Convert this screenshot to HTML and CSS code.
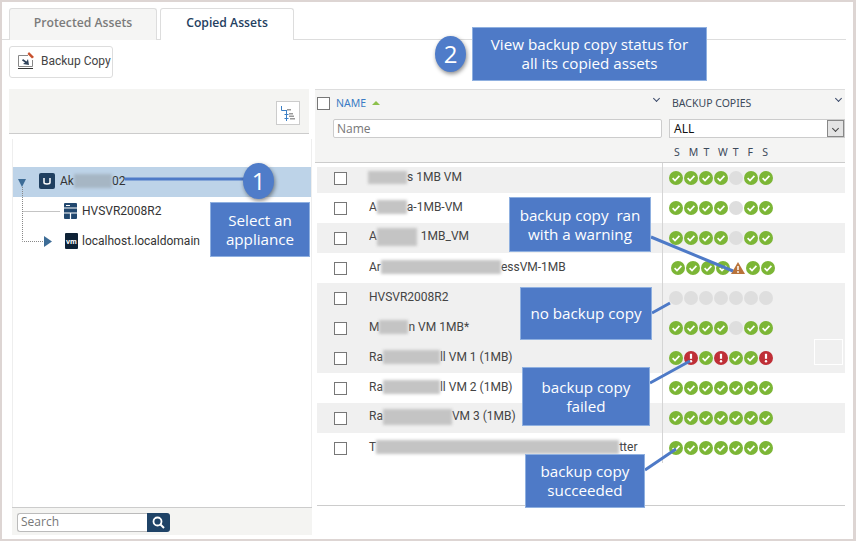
FILE: index.html
```html
<!DOCTYPE html>
<html lang="en">
<head>
<meta charset="utf-8">
<title>Copied Assets</title>
<link rel="stylesheet" href="styles.css">
</head>
<body>
<svg class="defs" width="0" height="0" aria-hidden="true">
  <symbol id="ok" viewBox="0 0 14 14"><circle cx="7" cy="7" r="7" fill="#7cb636"/><path d="M3.6 7.2l2.4 2.3 4.4-4.6" fill="none" stroke="#fff" stroke-width="1.7"/></symbol>
  <symbol id="none" viewBox="0 0 14 14"><circle cx="7" cy="7" r="7" fill="#dedede"/></symbol>
  <symbol id="bad" viewBox="0 0 14 14"><circle cx="7" cy="7" r="7" fill="#bf2f37"/><path d="M7 2.8v5" stroke="#fff" stroke-width="2.2"/><circle cx="7" cy="10.3" r="1.2" fill="#fff"/></symbol>
  <symbol id="warn" viewBox="0 0 14 14"><path d="M7 1L14 13H0z" fill="#b9733a"/><path d="M7 5v4" stroke="#fff" stroke-width="1.5"/><circle cx="7" cy="11" r=".9" fill="#fff"/></symbol>
</svg>
<div class="frame">
  <nav class="tabs">
    <div class="tab">Protected Assets</div>
    <div class="tab active">Copied Assets</div>
  </nav>
  <div class="toolbar">
    <button class="tool-btn">
      <svg width="18" height="18" viewBox="0 0 18 18"><path d="M11 3.500H1.500v11h14V8" fill="none" stroke="#888" stroke-width="1"/><path d="M1 16.500h15" stroke="#333" stroke-width="1"/><path d="M12 0l5 5-2 1.500-4.500-4.500z" fill="#c8502d"/><path d="M6 7l3.500 2.500L11 7l1 6-6-1 2-1.500-3-2z" fill="#30435a"/></svg>
      <span>Backup Copy</span>
    </button>
  </div>
  <main class="content">
    <section class="tree">
      <div class="tree-head">
        <button class="tree-btn">
          <svg width="14" height="15" viewBox="0 0 14 15"><path d="M.5 0v4.500h5M5.500 4v9M3.500 8.500h4M3.500 12.500h4M5.500 13v2" fill="none" stroke="#3b7fc4" stroke-width="1"/><path d="M6 3h4v1.500H6zM8 7h4v1.500H8zM8 9.500h5V11H8zM9 12h5v1.500H9z" fill="#999"/></svg>
        </button>
      </div>
      <div class="tree-body">
        <div class="tree-row selected">
          <i class="tri-down"></i>
          <svg class="node-icon" width="16" height="16" viewBox="0 0 16 16"><rect width="16" height="16" rx="2" fill="#1f3f60"/><path d="M5 5v4.500q0 1.500 3 1.500t3-1.500V5" fill="none" stroke="#fff" stroke-width="1.500"/></svg>
          <span>Ak<b class="blur b-a"></b>02</span>
        </div>
        <div class="tree-row child">
          <svg class="node-icon srv" width="13" height="16" viewBox="0 0 13 16"><rect width="13" height="16" rx="1" fill="#22486f"/><path d="M0 5h13M0 10h13M6.500 10v6" stroke="#fff" stroke-width="1.200"/><path d="M2 2.500h4" stroke="#fff"/></svg>
          <span>HVSVR2008R2</span>
        </div>
        <div class="tree-row child">
          <svg class="node-icon" width="13" height="16" viewBox="0 0 13 16"><rect width="13" height="16" rx="1" fill="#0e2236"/><text x="6.500" y="10.500" class="vm-text">vm</text></svg>
          <span>localhost.localdomain</span>
        </div>
        <svg class="tree-lines" width="60" height="70" viewBox="0 0 60 70"><path d="M9.500 0v54.500h22M9.500 24.500h37" fill="none" stroke="#888" stroke-dasharray="1 1"/><path d="M31 49l8 5.500-8 5.500z" fill="#3d6c96"/></svg>
      </div>
      <div class="tree-foot">
        <input class="search" placeholder="Search" aria-label="Search">
        <button class="search-btn"><svg width="13" height="13" viewBox="0 0 13 13"><circle cx="5.500" cy="5.500" r="4" fill="none" stroke="#fff" stroke-width="1.800"/><path d="M8.500 8.500l3.500 3.500" stroke="#fff" stroke-width="2"/></svg></button>
      </div>
    </section>
    <section class="grid">
      <div class="grid-head">
        <div class="col-check"><i class="check"></i></div>
        <div class="col-name">
          <div class="col-title"><span class="name-label">NAME <i class="sort"></i></span><i class="chev"></i></div>
          <input class="name-filter" placeholder="Name" aria-label="Name">
        </div>
        <div class="col-copies">
          <div class="col-title"><span>BACKUP COPIES</span><i class="chev"></i></div>
          <div class="select"><span>ALL</span><i class="select-arrow"><i class="chev dark"></i></i></div>
          <div class="days"><span>S</span><span>M</span><span>T</span><span>W</span><span>T</span><span>F</span><span>S</span></div>
        </div>
      </div>
      <div class="rows">
        <div class="row first"><i class="check"></i><span class="nm"><b class="blur b1"></b>s 1MB VM</span><span class="st"><svg><use href="#ok"/></svg><svg><use href="#ok"/></svg><svg><use href="#ok"/></svg><svg><use href="#ok"/></svg><svg><use href="#none"/></svg><svg><use href="#ok"/></svg><svg><use href="#ok"/></svg></span></div>
        <div class="row"><i class="check"></i><span class="nm">A<b class="blur b2"></b>a-1MB-VM</span><span class="st"><svg><use href="#ok"/></svg><svg><use href="#ok"/></svg><svg><use href="#ok"/></svg><svg><use href="#ok"/></svg><svg><use href="#none"/></svg><svg><use href="#ok"/></svg><svg><use href="#ok"/></svg></span></div>
        <div class="row shade"><i class="check"></i><span class="nm">A<b class="blur b3"></b>1MB_VM</span><span class="st"><svg><use href="#ok"/></svg><svg><use href="#ok"/></svg><svg><use href="#ok"/></svg><svg><use href="#ok"/></svg><svg><use href="#none"/></svg><svg><use href="#ok"/></svg><svg><use href="#ok"/></svg></span></div>
        <div class="row"><i class="check"></i><span class="nm">Ar<b class="blur b4"></b>essVM-1MB</span><span class="st nudge"><svg><use href="#ok"/></svg><svg><use href="#ok"/></svg><svg><use href="#ok"/></svg><svg><use href="#ok"/></svg><svg><use href="#warn"/></svg><svg><use href="#ok"/></svg><svg><use href="#ok"/></svg></span></div>
        <div class="row shade"><i class="check"></i><span class="nm">HVSVR2008R2</span><span class="st"><svg><use href="#none"/></svg><svg><use href="#none"/></svg><svg><use href="#none"/></svg><svg><use href="#none"/></svg><svg><use href="#none"/></svg><svg><use href="#none"/></svg><svg><use href="#none"/></svg></span></div>
        <div class="row shade"><i class="check"></i><span class="nm">M<b class="blur b6"></b>n VM 1MB*</span><span class="st"><svg><use href="#ok"/></svg><svg><use href="#ok"/></svg><svg><use href="#ok"/></svg><svg><use href="#ok"/></svg><svg><use href="#none"/></svg><svg><use href="#ok"/></svg><svg><use href="#ok"/></svg></span></div>
        <div class="row shade"><i class="check"></i><span class="nm">Ra<b class="blur b7"></b>ll VM 1 (1MB)</span><span class="st"><svg><use href="#ok"/></svg><svg><use href="#bad"/></svg><svg><use href="#ok"/></svg><svg><use href="#bad"/></svg><svg><use href="#ok"/></svg><svg><use href="#ok"/></svg><svg><use href="#bad"/></svg></span></div>
        <div class="row"><i class="check"></i><span class="nm">Ra<b class="blur b8"></b>ll VM 2 (1MB)</span><span class="st"><svg><use href="#ok"/></svg><svg><use href="#ok"/></svg><svg><use href="#ok"/></svg><svg><use href="#ok"/></svg><svg><use href="#ok"/></svg><svg><use href="#ok"/></svg><svg><use href="#ok"/></svg></span></div>
        <div class="row shade"><i class="check"></i><span class="nm">Ra<b class="blur b9"></b>VM 3 (1MB)</span><span class="st"><svg><use href="#ok"/></svg><svg><use href="#ok"/></svg><svg><use href="#ok"/></svg><svg><use href="#ok"/></svg><svg><use href="#ok"/></svg><svg><use href="#ok"/></svg><svg><use href="#ok"/></svg></span></div>
        <div class="row"><i class="check"></i><span class="nm">T<b class="blur b10"></b>tter</span><span class="st"><svg><use href="#ok"/></svg><svg><use href="#ok"/></svg><svg><use href="#ok"/></svg><svg><use href="#ok"/></svg><svg><use href="#ok"/></svg><svg><use href="#ok"/></svg><svg><use href="#ok"/></svg></span></div>
      </div>
    </section>
  </main>
</div>

<svg class="leaders" width="856" height="541" viewBox="0 0 856 541" aria-hidden="true">
  <path d="M125 179H245M651 237L733 271M652 313L670 303M650 383L690 361M645 470L676 449" fill="none" stroke="#4e7ac7" stroke-width="3"/>
</svg>
<div class="ghost"></div>
<div class="badge b-one">1</div>
<div class="badge b-two">2</div>
<div class="note n-select">Select an appliance</div>
<div class="note n-view">View backup copy status for all its copied assets</div>
<div class="note n-warn">backup copy&nbsp; ran with a warning</div>
<div class="note n-none">no backup copy</div>
<div class="note n-fail">backup copy failed</div>
<div class="note n-ok">backup copy succeeded</div>
</body>
</html>
```
FILE: styles.css
```css
* { box-sizing: border-box; }
html, body { margin: 0; padding: 0; }
body {
  width: 856px;
  height: 541px;
  position: relative;
  overflow: hidden;
  background: #fff;
  font-family: "Open Sans", "Noto Sans", sans-serif;
  color: #333;
}
.defs { position: absolute; }
.frame {
  width: 856px;
  height: 541px;
  border: 2px solid #ddd5d3;
  border-right-width: 3px;
  display: flex;
  flex-direction: column;
  background: #fff;
}
.tabs {
  display: flex;
  gap: 3px;
  height: 38px;
  padding: 6px 0 0 7px;
  width: 844px;
  border-bottom: 1px solid #ddd;
}
.tab {
  width: 148px;
  height: 32px;
  background: #f5f5f4;
  border: 1px solid #ddd;
  border-bottom: 0;
  border-radius: 3px 3px 0 0;
  color: #7b7b7b;
  font-size: 12.200px;
  font-weight: 600;
  text-align: center;
  line-height: 28px;
}
.tab.active {
  width: 134px;
  background: #fff;
  color: #24405f;
}
.toolbar { padding: 6px 0 0 7px; height: 49px; }
.tool-btn {
  width: 104px;
  height: 32px;
  padding: 0 0 2px 7px;
  background: #fff;
  border: 1px solid #ddd;
  border-radius: 3px;
  display: flex;
  align-items: center;
  gap: 6px;
  font: 12px Roboto, sans-serif;
  color: #444;
  white-space: nowrap;
}
.content { display: flex; flex: 1; min-height: 0; }
.tree {
  width: 305px;
  margin: 0 0 4px 7px;
  display: flex;
  flex-direction: column;
  position: relative;
}
.tree-head {
  width: 300px;
  height: 45px;
  background: #f4f4f2;
  border-bottom: 1px solid #ccc;
  display: flex;
  justify-content: flex-end;
  align-items: flex-start;
  padding: 12px 9px 0 0;
}
.tree-btn {
  width: 24px;
  height: 24px;
  padding: 3px;
  background: #fff;
  border: 1px solid #ccc;
  display: flex;
  align-items: center;
  justify-content: center;
}
.tree-body {
  flex: 1;
  margin: 5px 0 0 3px;
  width: 300px;
  padding-top: 28px;
  border-left: 1px solid #eee;
  border-right: 1px solid #eee;
  position: relative;
}
.tree-row {
  height: 30px;
  display: flex;
  align-items: center;
  font: 12px Roboto, sans-serif;
  color: #333;
  padding: 0 0 2px 52px;
  gap: 4px;
}
.tree-row.selected { background: #bdd3e8; padding-left: 5px; gap: 5px; }
.tree-row.selected .node-icon { margin-left: 8px; }
.tri-down {
  width: 0;
  height: 0;
  margin-top: 4px;
  border-left: 4.500px solid transparent;
  border-right: 4.500px solid transparent;
  border-top: 8px solid #3d6c96;
}
.node-icon { flex: none; }
.srv { margin-left: -1px; margin-right: 1px; }
.vm-text { fill: #fff; font: bold 7px "Noto Sans", sans-serif; text-anchor: middle; }
.tree-lines { position: absolute; left: 0; top: 48px; }
.tree-foot {
  margin-left: 3px;
  width: 300px;
  height: 28px;
  background: #f4f4f2;
  border-top: 1px solid #ccc;
  display: flex;
  padding: 5px 0 0 5px;
}
.search {
  width: 130px;
  height: 19px;
  padding: 0 3px 2px;
  border: 1px solid #bbb;
  border-right: 0;
  border-radius: 3px 0 0 3px;
  font: 12px "Open Sans", sans-serif;
  background: #fff;
}
.search::placeholder, .name-filter::placeholder { color: #777; opacity: 1; }
.search-btn {
  width: 23px;
  height: 19px;
  padding: 0;
  border: 0;
  border-radius: 0 3px 3px 0;
  background: #1f4367;
  display: flex;
  align-items: center;
  justify-content: center;
}
.grid { width: 530px; margin-left: 1px; height: 417px; }
.grid-head {
  height: 74px;
  background: #f4f4f3;
  border-top: 1px solid #ddd;
  border-bottom: 1px solid #ccc;
  display: flex;
}
.col-check { width: 18px; padding: 7px 0 0 2px; }
.check {
  display: block;
  width: 13px;
  height: 13px;
  background: #fff;
  border: 1px solid #777;
  flex: none;
}
.col-name { width: 330px; }
.col-title {
  height: 29px;
  display: flex;
  justify-content: space-between;
  padding: 5px 4px 0 3px;
  font: 10.500px "Noto Sans", sans-serif;
  line-height: 17px;
  color: #3c4a5a;
}
.name-label { color: #3b7cc4; }
.sort {
  display: inline-block;
  margin-left: 3px;
  vertical-align: 2px;
  border-left: 4px solid transparent;
  border-right: 4px solid transparent;
  border-bottom: 4px solid #8cc04b;
}
.chev {
  display: block;
  width: 5px;
  height: 5px;
  margin-top: 1px;
  border-right: 1px solid #3c4a6a;
  border-bottom: 1px solid #3c4a6a;
  transform: rotate(45deg);
}
.chev.dark { margin: 0; border-color: #444; }
.name-filter {
  display: block;
  width: 329px;
  height: 19px;
  padding: 0 3px;
  border: 1px solid #ccc;
  border-radius: 2px;
  background: #fff;
  font: 12px "Open Sans", sans-serif;
}
.col-copies { width: 182px; padding-left: 6px; }
.select {
  width: 176px;
  height: 19px;
  background: #fff;
  border: 1px solid #ccc;
  display: flex;
  justify-content: space-between;
  font: 12px/17px "Noto Sans", sans-serif;
  color: #111;
  padding-left: 4px;
}
.select-arrow {
  width: 17px;
  background: #e4e4e4;
  border: 1px solid #888;
  display: flex;
  align-items: center;
  justify-content: center;
}
.days {
  display: flex;
  padding: 7px 0 0 5px;
  font: 10.500px "Noto Sans", sans-serif;
  color: #3c4a5a;
}
.days span { width: 14.700px; }
.rows {
  margin-left: 2px;
  height: 343px;
  border-bottom: 1px solid #ccc;
  background: #fff;
}
.row {
  height: 30px;
  display: flex;
  align-items: center;
  font: 12px Roboto, sans-serif;
  color: #444;
  padding-left: 17px;
}
.row.shade { background: #f0f0f0; }
.row.first { background: linear-gradient(#fff 4px, #f0f0f0 4px); }
.nm { margin-left: 22px; width: 293px; white-space: nowrap; padding-bottom: 2px; }
.st { display: flex; gap: 1px; height: 30px; align-items: center; padding-left: 6px; border-left: 1px solid #d5d5d5; }
.st svg { width: 14px; height: 14px; flex: none; }
.st.nudge { padding-left: 8px; }
.blur {
  display: inline-block;
  height: 14px;
  vertical-align: middle;
  background: #c4c4c4;
  filter: blur(1.500px);
}
.b-a { width: 38px; background: #a6b6c4; height: 14px; }
.b1 { width: 39px; height: 13px; margin-left: -1px; }
.b2 { width: 30px; }
.b3 { width: 40px; height: 18px; margin-right: 4px; }
.b4 { width: 120px; }
.b6 { width: 29px; }
.b7 { width: 57px; }
.b8 { width: 57px; }
.b9 { width: 69px; height: 16px; }
.b10 { width: 243px; }
.leaders { position: absolute; left: 0; top: 0; pointer-events: none; }
.ghost { position: absolute; left: 814px; top: 339px; width: 29px; height: 26px; border: 1px solid #fff; }
.badge {
  position: absolute;
  width: 31px;
  height: 36px;
  border-radius: 50%;
  background: #4f7cc9;
  color: #fff;
  font: 24px/36px "Open Sans", sans-serif;
  text-align: center;
  box-shadow: 1px 2px 4px rgba(0, 0, 0, .45);
}
.b-one { left: 243px; top: 163px; }
.b-two { left: 435px; top: 36px; }
.note {
  position: absolute;
  background: #4e7ac7;
  border: 1px solid #8fb0e0;
  color: #fff;
  font: 15.200px/19px "Open Sans", sans-serif;
  text-align: center;
  display: flex;
  align-items: center;
  justify-content: center;
  padding: 0 8px;
}
.n-select { left: 210px; top: 202px; width: 100px; height: 55px; }
.n-view { left: 472px; top: 27px; width: 235px; height: 54px; padding: 0 14px; }
.n-warn { left: 509px; top: 197px; width: 142px; height: 55px; }
.n-none { left: 520px; top: 287px; width: 132px; height: 53px; padding: 0; }
.n-fail { left: 522px; top: 367px; width: 128px; height: 59px; }
.n-ok { left: 525px; top: 454px; width: 120px; height: 54px; }
```
